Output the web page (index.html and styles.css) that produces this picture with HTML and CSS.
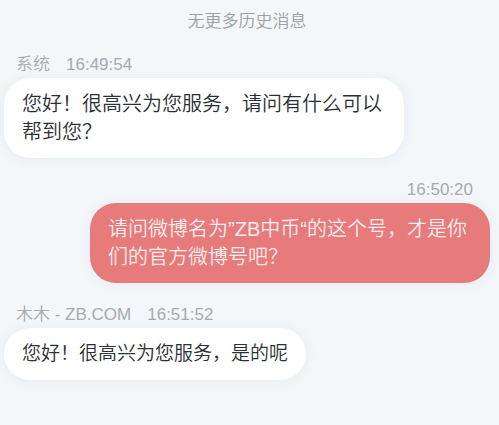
FILE: index.html
```html
<!DOCTYPE html>
<html lang="zh-CN">
<head>
  <meta charset="UTF-8" />
  <meta name="viewport" content="width=device-width, initial-scale=1" />
  <title>在线客服</title>
  <link rel="stylesheet" href="styles.css">
</head>
<body>
  <main class="chat">
    <p class="history">无更多历史消息</p>

    <!-- 系统 -->
    <section class="message">
      <div class="meta"><span>系统</span><time>16:49:54</time></div>
      <p class="bubble">您好！很高兴为您服务，请问有什么可以帮到您？</p>
    </section>

    <!-- 用户 -->
    <section class="message mine">
      <div class="meta"><time>16:50:20</time></div>
      <p class="bubble">请问微博名为”ZB中币“的这个号，才是你们的官方微博号吧？</p>
    </section>

    <!-- 客服 -->
    <section class="message small">
      <div class="meta"><span>木木 - ZB.COM</span><time>16:51:52</time></div>
      <p class="bubble">您好！很高兴为您服务，是的呢</p>
    </section>
  </main>
</body>
</html>
```

FILE: styles.css
```css
* {
  box-sizing: border-box;
}

body {
  margin: 0;
  background: #f3f7fa;
  color: #2b2f33;
  font-family: "Liberation Sans", "Noto Sans CJK SC", sans-serif;
  font-weight: 350;
}

p {
  margin: 0;
}

.chat {
  display: flex;
  flex-direction: column;
  gap: 21px;
  padding: 11px 9px 11px 4px;
}

.history {
  color: #9da1a5;
  font-size: 17px;
  line-height: 22px;
  text-align: center;
}

.message {
  display: flex;
  flex-direction: column;
  align-items: flex-start;
}

.meta {
  display: flex;
  gap: 16px;
  padding: 0 12px 2px;
  color: #a6aaae;
  font-size: 17px;
  line-height: 22px;
}

.bubble {
  max-width: 400px;
  padding: 12px 18px;
  border-radius: 26px;
  background: #fff;
  box-shadow: 0 1px 12px rgba(60, 90, 110, 0.08);
  font-size: 20px;
  line-height: 28px;
}

.mine {
  align-items: flex-end;
}

.mine .meta {
  padding: 0 17px 2px;
}

.mine .bubble {
  background: #e77a7b;
  color: #fdecec;
}

.small .bubble {
  font-size: 19px;
}
```
